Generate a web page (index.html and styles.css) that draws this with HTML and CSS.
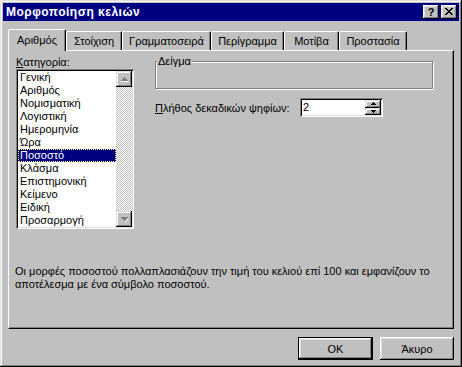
FILE: index.html
```html
<!DOCTYPE html>
<html lang="el">
<head>
	<meta charset="UTF-8">
	<title>Μορφοποίηση κελιών</title>
	<link rel="stylesheet" href="styles.css">
</head>
<body>
	<div id="window">
		<!-- title bar -->
		<div class="titlebar">
			<span class="title">Μορφοποίηση κελιών</span>
			<div class="caption-btns">
				<span class="cap-btn help">?</span>
				<span class="cap-btn">
					<svg width="8" height="7" viewBox="0 0 8 7"><path d="M0 0h2v1h1v1h2V1h1V0h2v1H7v1H6v1H5v1h1v1h1v1h1v1H6V6H5V5H3v1H2v1H0V6h1V5h1V4h1V3H2V2H1V1H0z" fill="#000"/></svg>
				</span>
			</div>
		</div>

		<div class="dlg-body">
			<div class="tabs">
				<div class="tab active" style="width:58px">Αριθμός</div>
				<div class="tab" style="width:56px">Στοίχιση</div>
				<div class="tab" style="width:89px">Γραμματοσειρά</div>
				<div class="tab" style="width:73px">Περίγραμμα</div>
				<div class="tab" style="width:55px">Μοτίβα</div>
				<div class="tab" style="width:68px">Προστασία</div>
			</div>

			<div class="panel">
				<div class="top-row">
					<div class="cat-col">
						<div class="lbl"><u>Κ</u>ατηγορία:</div>
						<div class="listbox">
							<ul class="items">
								<li>Γενική</li>
								<li>Αριθμός</li>
								<li>Νομισματική</li>
								<li>Λογιστική</li>
								<li>Ημερομηνία</li>
								<li>Ώρα</li>
								<li class="sel">Ποσοστό</li>
								<li>Κλάσμα</li>
								<li>Επιστημονική</li>
								<li>Κείμενο</li>
								<li>Ειδική</li>
								<li>Προσαρμογή</li>
							</ul>
							<div class="scrollbar">
								<div class="sb-btn">
									<svg width="7" height="5" viewBox="0 0 7 5"><path d="M3 0h1v1h1v1h1v1h1v1H0V3h1V2h1V1h1z" fill="#808080"/><path d="M0 4h7v1H0z" fill="#fff"/></svg>
								</div>
								<div class="sb-track"></div>
								<div class="sb-btn">
									<svg width="7" height="5" viewBox="0 0 7 5"><path d="M0 0h7v1H6v1H5v1H4v1H3V3H2V2H1V1H0z" fill="#808080"/><path d="M4 4h1v1H4zM5 3h1v1H5zM6 2h1v1H6z" fill="#fff"/></svg>
								</div>
							</div>
						</div>
					</div>

					<div class="opt-col">
						<div class="groupbox">
							<span class="legend">Δείγμα</span>
						</div>
						<div class="dec-row">
							<span class="dec-lbl"><u>Π</u>λήθος δεκαδικών ψηφίων:</span>
							<div class="spinner">
								<span class="spin-val">2</span>
								<div class="spin-btns">
									<div class="spin-btn">
										<svg width="5" height="3" viewBox="0 0 5 3"><path d="M2 0h1v1h1v1h1v1H0V2h1V1h1z" fill="#000"/></svg>
									</div>
									<div class="spin-btn">
										<svg width="5" height="3" viewBox="0 0 5 3"><path d="M0 0h5v1H4v1H3v1H2V2H1V1H0z" fill="#000"/></svg>
									</div>
								</div>
							</div>
						</div>
					</div>
				</div>

				<p class="desc">Οι μορφές ποσοστού πολλαπλασιάζουν την τιμή του κελιού επί 100 και εμφανίζουν το αποτέλεσμα με ένα σύμβολο ποσοστού.</p>
			</div>

			<div class="btn-row">
				<div class="btn default">OK</div>
				<div class="btn" style="width:74px">Άκυρο</div>
			</div>
		</div>
	</div>
</body>
</html>
```

FILE: styles.css
```css
body {
	margin: 0;
	background-color: #c0c0c0;
	font-family: "Liberation Sans", Arial, sans-serif;
	font-size: 11px;
	color: #000;
}
#window {
	width: 462px;
	height: 367px;
	box-sizing: border-box;
	padding: 3px;
	background-color: #c0c0c0;
	box-shadow: inset -1px -1px #000, inset 1px 1px #dfdfdf, inset -2px -2px #808080, inset 2px 2px #fff;
	display: flex;
	flex-direction: column;
}
.titlebar {
	height: 18px;
	background-color: #000080;
	color: #fff;
	display: flex;
	align-items: center;
	justify-content: space-between;
	padding: 0 2px 0 3px;
}
.title {
	font-weight: bold;
	font-size: 12px;
	letter-spacing: 0.5px;
}
.caption-btns {
	display: flex;
	gap: 2px;
}
.cap-btn {
	width: 16px;
	height: 14px;
	box-sizing: border-box;
	background-color: #c0c0c0;
	color: #000;
	box-shadow: inset -1px -1px #000, inset 1px 1px #fff, inset -2px -2px #808080, inset 2px 2px #dfdfdf;
	display: flex;
	align-items: center;
	justify-content: center;
	font-weight: bold;
	font-size: 11px;
	line-height: 14px;
}
.cap-btn svg {
	display: block;
	margin-top: -1px;
}
.dlg-body {
	padding: 8px 5px 0 5px;
	display: flex;
	flex-direction: column;
}
.tabs {
	display: flex;
	align-items: flex-end;
	height: 21px;
}
.tab {
	height: 19px;
	box-sizing: border-box;
	border-top: 1px solid #fff;
	border-left: 1px solid #fff;
	border-right: 1px solid #000;
	border-radius: 2px 2px 0 0;
	box-shadow: inset -1px 0 #808080;
	background-color: #c0c0c0;
	text-align: center;
	line-height: 16px;
	padding-top: 1px;
}
.tab.active {
	height: 22px;
	margin-bottom: -1px;
	position: relative;
	z-index: 1;
	line-height: 18px;
}
.panel {
	height: 279px;
	box-sizing: border-box;
	border-top: 1px solid #fff;
	border-left: 1px solid #fff;
	border-right: 1px solid #000;
	border-bottom: 1px solid #000;
	box-shadow: inset -1px -1px #808080;
	padding: 5px 7px 0 7px;
}
.top-row {
	display: flex;
}
.cat-col {
	width: 118px;
}
.lbl {
	height: 13px;
	line-height: 13px;
}
.listbox {
	height: 160px;
	box-sizing: border-box;
	background-color: #fff;
	box-shadow: inset 1px 1px #808080, inset -1px -1px #fff, inset 2px 2px #000, inset -2px -2px #dfdfdf;
	padding: 2px;
	display: flex;
}
.items {
	list-style: none;
	margin: 0;
	padding: 0;
	flex: 1;
}
.items li {
	height: 13px;
	line-height: 13px;
	padding-left: 2px;
	white-space: nowrap;
}
.items li.sel {
	background-color: #000080;
	color: #fff;
	outline: 1px dotted #ffff80;
	outline-offset: -1px;
}
.scrollbar {
	width: 16px;
	display: flex;
	flex-direction: column;
}
.sb-btn {
	height: 16px;
	box-sizing: border-box;
	background-color: #c0c0c0;
	box-shadow: inset -1px -1px #000, inset 1px 1px #dfdfdf, inset -2px -2px #808080, inset 2px 2px #fff;
	display: flex;
	align-items: center;
	justify-content: center;
}
.sb-track {
	flex: 1;
	background: repeating-conic-gradient(#c0c0c0 0 25%, #fff 0 50%) 0 0 / 2px 2px;
}
.opt-col {
	margin-left: 21px;
	padding-top: 5px;
}
.groupbox {
	width: 278px;
	height: 28px;
	box-sizing: border-box;
	border: 1px solid #808080;
	box-shadow: 1px 1px #fff, inset 1px 1px #fff;
}
.legend {
	display: inline-block;
	margin: -7px 0 0 1px;
	padding: 0 1px;
	background-color: #c0c0c0;
	line-height: 13px;
	vertical-align: top;
}
.dec-row {
	display: flex;
	align-items: center;
	margin-top: 9px;
}
.dec-lbl {
	width: 145px;
}
.spinner {
	width: 83px;
	height: 19px;
	box-sizing: border-box;
	background-color: #fff;
	box-shadow: inset 1px 1px #808080, inset -1px -1px #fff, inset 2px 2px #000, inset -2px -2px #dfdfdf;
	padding: 2px;
	display: flex;
	justify-content: space-between;
}
.spin-val {
	line-height: 15px;
	padding-left: 1px;
}
.spin-btns {
	width: 16px;
	display: flex;
	flex-direction: column;
}
.spin-btn {
	flex: 1;
	background-color: #c0c0c0;
	box-shadow: inset -1px -1px #000, inset 1px 1px #dfdfdf, inset -2px -2px #808080, inset 2px 2px #fff;
	display: flex;
	align-items: center;
	justify-content: center;
}
.desc {
	margin: 36px 0 0 -1px;
	line-height: 13px;
	width: 420px;
}
.btn-row {
	display: flex;
	justify-content: flex-end;
	gap: 7px;
	margin-top: 8px;
}
.btn {
	width: 75px;
	height: 23px;
	box-sizing: border-box;
	background-color: #c0c0c0;
	box-shadow: inset -1px -1px #000, inset 1px 1px #fff, inset -2px -2px #808080, inset 2px 2px #dfdfdf;
	display: flex;
	align-items: center;
	justify-content: center;
}
.btn.default {
	box-shadow: inset 0 0 0 1px #000, inset -2px -2px #000, inset 2px 2px #fff, inset -3px -3px #808080, inset 3px 3px #dfdfdf;
}
```
